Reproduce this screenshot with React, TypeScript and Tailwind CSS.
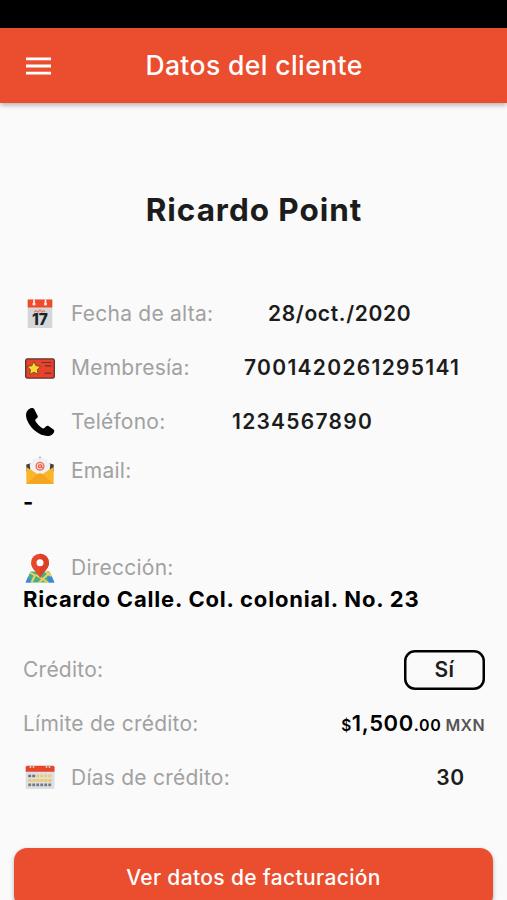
import type { ReactNode } from "react";

function CalendarDayIcon() {
  return (
    <svg width="26" height="30" viewBox="0 0 26 30">
      <rect x="0.7" y="0.5" width="24.6" height="28.5" fill="#d5d8da" />
      <rect x="0.7" y="0.5" width="24.6" height="8" fill="#f0492b" />
      <path d="M7 0.5v4.5M18.5 0.5v4.5" stroke="#fff" strokeWidth="1.6" />
      <circle cx="7" cy="5" r="1.6" fill="#fbe9e5" />
      <circle cx="18.5" cy="5" r="1.6" fill="#fbe9e5" />
      <path d="M7 13.3l2-1.8 2 1.6 2-2.2 2 2.2 1.6-1.6 1.6 1.8" fill="none" stroke="#e8806b" strokeWidth="1.3" />
      <text x="13" y="26" textAnchor="middle" fontSize="15.5" fontWeight="800" fill="#1c2226">
        17
      </text>
    </svg>
  );
}

function CardIcon() {
  return (
    <svg width="30" height="21" viewBox="0 0 30 21">
      <rect x="0.7" y="0.9" width="28.6" height="19.2" rx="1.6" fill="#e8432a" stroke="#5b3030" strokeWidth="1.3" />
      <path d="M16.5 4.5h10M20 7.8h6.5M19.5 15.2h7" stroke="#6e2f2a" strokeWidth="1.2" />
      <path
        d="M8.900 3.400l2.100 4.300 4.700.7-3.400 3.300.8 4.700-4.200-2.200-4.200 2.200.8-4.700-3.400-3.300 4.700-.7z"
        fill="#f9d72f"
        stroke="#6b4a28"
        strokeWidth="0.9"
      />
    </svg>
  );
}

function PhoneIcon() {
  return (
    <svg width="30" height="30" viewBox="0 0 30 30">
      <path
        d="M5.6 1.2C3 2.2 1 4.600 1 8c0 5.500 4.300 11.800 9 15.800 4 3.400 8.800 5.200 12.500 5.200 3.600 0 6.100-2.200 6.700-4.600.2-.8 0-1.500-.7-2l-5-3.300c-.8-.5-1.800-.4-2.500.3l-1.700 1.700c-.5.5-1.200.6-1.900.2-2.900-1.800-5.400-4.400-7-7.300-.3-.6-.2-1.200.3-1.700l1.400-1.200c.7-.6.9-1.500.5-2.300L9.300 2.300C8.600 1 7 .6 5.600 1.200z"
        fill="#000"
      />
    </svg>
  );
}

function MailIcon() {
  return (
    <svg width="30" height="30" viewBox="0 0 30 30">
      <path d="M1.300 8.500L6 7.300h18l4.700 1.200v7H1.300z" fill="#3c4043" />
      <path d="M15 0.800L18 2.500l3.300.3 1.700 3 2.300 2.400-.6 6L15 20l-9.700-5.800-.6-6L7 5.800l1.700-3 3.300-.3z" fill="#f1f1f4" />
      <circle cx="15" cy="1.400" r="0.900" fill="#b7a0e8" />
      <circle cx="15" cy="10.300" r="3.900" fill="#fbd5cd" stroke="#ef6b55" strokeWidth="1.300" />
      <circle cx="15" cy="10.300" r="1.500" fill="none" stroke="#e8503a" strokeWidth="1.100" />
      <path d="M16.700 8.600v2.500c0 1 1.500 1 1.800 0" fill="none" stroke="#e8503a" strokeWidth="0.900" />
      <path d="M1.300 11L15 19.500 28.700 11v17H1.300z" fill="#fbb52c" />
      <path d="M1.300 28L12.500 18q2.500-1.500 5 0l11.200 10z" fill="#f3a61f" />
    </svg>
  );
}

function MapPinIcon() {
  return (
    <svg width="30" height="30" viewBox="0 0 30 30">
      <path d="M5.500 18.500h19L29.400 29.500H.6z" fill="#3fb386" />
      <path d="M3.300 23.500L.6 29.500h6zM22 23.500h4.800l2.600 6h-5.500z" fill="#3f86e0" />
      <path d="M5 19.500l5 2.800-3.500 7.200M11 22l12 7.500M25 19.500l-11 10M20 18.500l6 4.500" fill="none" stroke="#f3cf62" strokeWidth="2" />
      <path d="M15 25.200C13.500 20 6 16.500 6 9.700a9 9 0 0118 0c0 6.800-7.500 10.300-9 15.500z" fill="#e9472c" />
      <path d="M15 25.200V.7a9 9 0 019 9c0 6.800-7.500 10.300-9 15.500z" fill="#dd3f27" />
      <circle cx="15" cy="9.700" r="3.500" fill="#fff" />
    </svg>
  );
}

function CalendarMonthIcon() {
  const columns = [4.5, 8.5, 12.5, 16.5, 20.5, 24.5];

  return (
    <svg width="30" height="28" viewBox="0 0 30 28">
      <rect x="0.700" y="3" width="28.800" height="22" rx="1" fill="#dcdfe3" />
      <path d="M0.700 7.700V3.200q0-1.500 1.500-1.500H28q1.500 0 1.500 1.500v4.500z" fill="#e9452b" />
      <path d="M5.500 4V0.700M8.500 4V0.700M21.500 4V0.700M24.500 4V0.700" stroke="#d3d0d2" strokeWidth="1.500" />
      {columns.map((x, i) => (
        <g key={x}>
          <rect x={x - 1.2} y="10.700" width="2.800" height="2.500" fill={i < 2 ? "#686e7c" : "#f3c75a"} />
          <rect x={x - 1.2} y="15" width="3.200" height="2.700" fill="#f3c75a" />
          <rect x={x - 1.2} y="19.500" width="2.800" height="2.700" fill="#747985" />
        </g>
      ))}
    </svg>
  );
}

function Label({ icon, children }: { icon?: ReactNode; children: ReactNode }) {
  return (
    <div className="flex items-center whitespace-nowrap text-[21px] leading-6 text-[#a1a1a1]">
      {icon && <span className="mr-[14px] flex w-[34px] shrink-0 justify-center">{icon}</span>}
      <span className="tracking-[0.24px]">{children}</span>
    </div>
  );
}

function App() {
  return (
    <div className="flex h-[900px] w-[507px] flex-col overflow-hidden bg-[#fafafa] font-['Inter',sans-serif] text-[#1c1c1c]">
      <div className="h-7 shrink-0 bg-black" />

      <header className="flex h-[75px] shrink-0 items-center bg-[#eb4e2e] pr-[25px] pl-[26px] text-white shadow-[0_2px_5px_rgba(0,0,0,0.3)]">
        <svg width="25" height="18" viewBox="0 0 25 18" fill="#fff">
          <path d="M0 0.500h25v2.800H0zM0 7.600h25v2.800H0zM0 14.700h25v2.800H0z" />
        </svg>
        <h1 className="flex-1 pr-[25px] text-center text-[26.5px] font-medium tracking-[0.4px]">Datos del cliente</h1>
      </header>

      <main className="flex flex-1 flex-col pt-[87px]">
        <h2 className="pl-px text-center text-[31.5px] leading-10 font-bold tracking-[0.95px]">Ricardo Point</h2>

        <section className="flex flex-col pt-[57px] pr-[22px] pl-[23px]">
          {/* Datos generales */}
          <div className="flex h-[54px] items-center">
            <div className="w-[245px]">
              <Label icon={<CalendarDayIcon />}>Fecha de alta:</Label>
            </div>
            <span className="text-[21px] font-semibold tracking-[0.65px]">28/oct./2020</span>
          </div>
          <div className="flex h-[54px] items-center">
            <div className="w-[221px]">
              <Label icon={<CardIcon />}>Membresía:</Label>
            </div>
            <span className="text-[21px] font-semibold tracking-[1.3px]">7001420261295141</span>
          </div>
          <div className="flex h-[54px] items-center">
            <div className="w-[209px]">
              <Label icon={<PhoneIcon />}>Teléfono:</Label>
            </div>
            <span className="text-[21px] font-semibold tracking-[1.25px]">1234567890</span>
          </div>

          <div className="mt-[6px] flex h-[32px] items-center">
            <Label icon={<MailIcon />}>Email:</Label>
          </div>
          <p className="-mt-px h-8 text-[22px] leading-8 font-bold text-black">-</p>

          {/* Dirección */}
          <div className="mt-[34px] flex h-[32px] items-center">
            <Label icon={<MapPinIcon />}>Dirección:</Label>
          </div>
          <p className="-mt-px h-8 text-[22px] leading-8 font-bold tracking-[0.81px] whitespace-nowrap text-black">
            Ricardo Calle. Col. colonial. No. 23
          </p>

          {/* Crédito */}
          <div className="mt-[28px] flex h-[54px] items-center justify-between">
            <Label>Crédito:</Label>
            <span className="flex h-10 w-[81px] items-center justify-center rounded-[11px] text-[21px] font-semibold tracking-[0.4px] shadow-[inset_0_0_0_2.5px_#000]">
              Sí
            </span>
          </div>
          <div className="flex h-[54px] items-center justify-between">
            <Label>Límite de crédito:</Label>
            <div className="-mt-px flex items-baseline font-semibold tracking-[0.6px] whitespace-nowrap text-black">
              <span className="text-[15.5px]">$</span>
              <span className="text-[22px]">1,500</span>
              <span className="text-base">.00</span>
              <span className="ml-1 text-base tracking-[0.4px] text-[#555]">MXN</span>
            </div>
          </div>
          <div className="flex h-[54px] items-center justify-between pr-[20px]">
            <Label icon={<CalendarMonthIcon />}>Días de crédito:</Label>
            <span className="text-[21px] font-semibold tracking-[0.8px]">30</span>
          </div>
        </section>

        <button className="mx-[14px] mt-[43px] h-[60px] shrink-0 rounded-[13px] bg-[#eb4e2e] text-[21px] font-medium tracking-[0.35px] text-white shadow-[0_2px_4px_rgba(0,0,0,0.3)]">
          Ver datos de facturación
        </button>
      </main>
    </div>
  );
}

export default App;
